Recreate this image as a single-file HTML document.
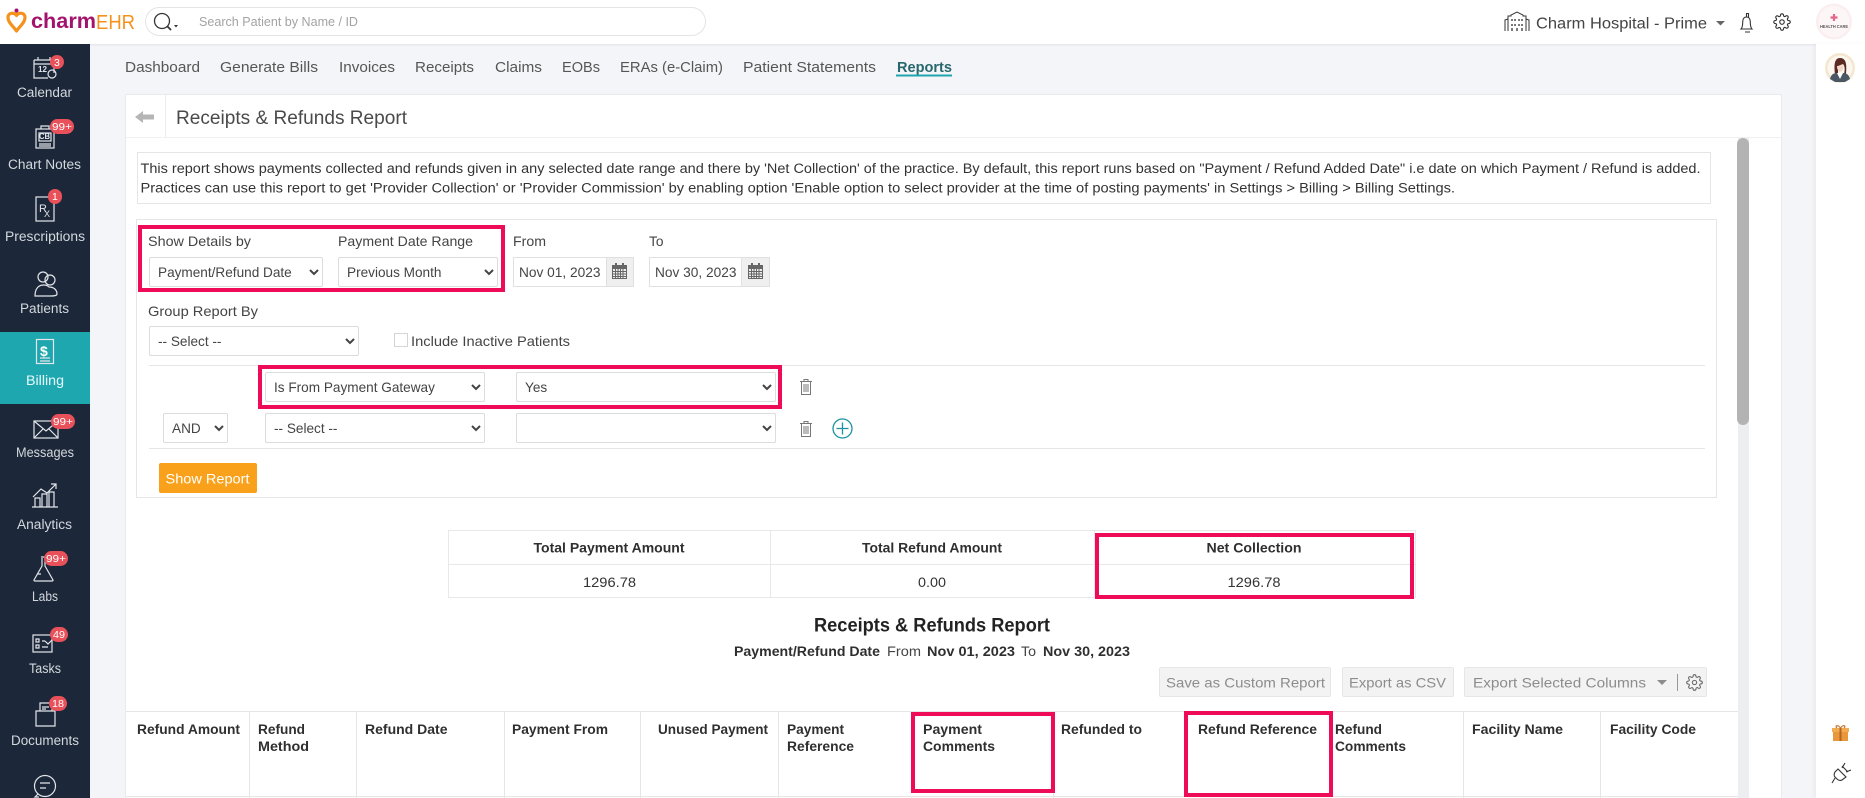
<!DOCTYPE html>
<html lang="en">
<head>
<meta charset="utf-8">
<title>Receipts &amp; Refunds Report</title>
<style>
html,body{margin:0;padding:0;width:1865px;height:798px;overflow:hidden;background:#f4f5f8;font-family:"Liberation Sans",sans-serif}
#w{position:absolute;left:0;top:0;width:1865px;height:798px;overflow:hidden;filter:blur(.35px)}
.a{position:absolute;box-sizing:border-box}
select{position:absolute;box-sizing:border-box;background:#fff;border:1px solid #dcdcdc;border-radius:2px;color:#444;font:13.6px "Liberation Sans",sans-serif;padding:0 0 0 4px;margin:0;outline:0}
svg.o{position:absolute;left:0;top:0;pointer-events:none}
svg text{font-family:"Liberation Sans",sans-serif;fill:#444;font-size:14px}
.b{font-weight:700;fill:#2f2f2f}
.s{fill:#d3d8dd;font-size:13.5px}
.t{fill:#fff;font-size:10.5px}
.i{fill:none;stroke:#e3e6ea;stroke-width:1.2}
.n{font-size:15px;fill:#565656}
.g{fill:#8c8c8c;font-size:14px}
.r{position:absolute;box-sizing:border-box;border:4px solid #ee0b58}
</style>
</head>
<body>
<div id="w">
<!-- top bar -->
<div class="a" style="left:0;top:0;width:1865px;height:44px;background:#fff;box-shadow:0 1px 2px rgba(0,0,0,.08)"></div>
<div class="a" style="left:145px;top:7px;width:561px;height:29px;border:1px solid #e4e4e4;border-radius:15px;background:#fff"></div>
<!-- sidebar -->
<div class="a" style="left:0;top:44px;width:90px;height:754px;background:#1c2739"></div>
<div class="a" style="left:0;top:332px;width:90px;height:72px;background:#1fa7af"></div>
<!-- right rail -->
<div class="a" style="left:1816px;top:44px;width:49px;height:754px;background:#fff;box-shadow:-3px 0 4px rgba(0,0,0,.04)"></div>
<!-- panel -->
<div class="a" style="left:125px;top:94px;width:1657px;height:704px;background:#fff;border:1px solid #e9eaec;border-bottom:0;border-radius:2px"></div>
<div class="a" style="left:126px;top:137px;width:1655px;height:1px;background:#f1f1f1"></div>
<div class="a" style="left:165px;top:95px;width:1px;height:42px;background:#ececec"></div>
<!-- scrollbar -->
<div class="a" style="left:1738px;top:138px;width:11px;height:660px;background:#eceef1"></div>
<div class="a" style="left:1737px;top:138px;width:12px;height:287px;background:#b3b3b3;border-radius:6px"></div>
<!-- description -->
<div class="a" style="left:137px;top:152px;width:1574px;height:52px;border:1px solid #e6e6e6"></div>
<!-- form -->
<div class="a" style="left:136px;top:219px;width:1581px;height:279px;border:1px solid #e6e6e6"></div>
<select style="left:149px;top:257px;width:174px;height:30px"><option>Payment/Refund Date</option></select>
<select style="left:338px;top:257px;width:160px;height:30px"><option>Previous Month</option></select>
<div class="a" style="left:513px;top:257px;width:121px;height:30px;border:1px solid #e0e0e0;background:#fff"></div>
<div class="a" style="left:606px;top:257px;width:28px;height:30px;border:1px solid #e0e0e0;background:#efefef"></div>
<div class="a" style="left:649px;top:257px;width:121px;height:30px;border:1px solid #e0e0e0;background:#fff"></div>
<div class="a" style="left:741px;top:257px;width:29px;height:30px;border:1px solid #e0e0e0;background:#efefef"></div>
<select style="left:149px;top:326px;width:210px;height:30px"><option>-- Select --</option></select>
<div class="a" style="left:394px;top:333px;width:14px;height:14px;border:1px solid #d5d5d5;background:#fff"></div>
<div class="a" style="left:149px;top:365px;width:1556px;height:1px;background:#e6e6e6"></div>
<select style="left:265px;top:372px;width:220px;height:30px"><option>Is From Payment Gateway</option></select>
<select style="left:516px;top:372px;width:260px;height:30px"><option>Yes</option></select>
<select style="left:163px;top:413px;width:65px;height:30px"><option>AND</option></select>
<select style="left:265px;top:413px;width:220px;height:30px"><option>-- Select --</option></select>
<select style="left:516px;top:413px;width:260px;height:30px"><option></option></select>
<div class="a" style="left:149px;top:448px;width:1556px;height:1px;background:#e6e6e6"></div>
<div class="a" style="left:159px;top:463px;width:98px;height:30px;background:#f9a11b;border-radius:2px"></div>
<!-- summary table -->
<div class="a" style="left:448px;top:530px;width:968px;height:68px;border:1px solid #e8e8e8"></div>
<div class="a" style="left:449px;top:564px;width:966px;height:1px;background:#e8e8e8"></div>
<div class="a" style="left:770px;top:531px;width:1px;height:66px;background:#e8e8e8"></div>
<div class="a" style="left:1094px;top:531px;width:1px;height:66px;background:#e8e8e8"></div>
<!-- buttons -->
<div class="a" style="left:1159px;top:667px;width:172px;height:30px;background:#f3f3f3;border:1px solid #e6e6e6;border-radius:2px"></div>
<div class="a" style="left:1342px;top:667px;width:112px;height:30px;background:#f3f3f3;border:1px solid #e6e6e6;border-radius:2px"></div>
<div class="a" style="left:1464px;top:667px;width:243px;height:30px;background:#f3f3f3;border:1px solid #e6e6e6;border-radius:2px"></div>
<div class="a" style="left:1677px;top:674px;width:1px;height:17px;background:#999"></div>
<!-- report table -->
<div class="a" style="left:126px;top:711px;width:1612px;height:1px;background:#e6e6e6"></div>
<div class="a" style="left:126px;top:796px;width:1612px;height:1px;background:#e6e6e6"></div>
<div class="a" style="left:249px;top:711px;width:1px;height:87px;background:#e6e6e6"></div>
<div class="a" style="left:356px;top:711px;width:1px;height:87px;background:#e6e6e6"></div>
<div class="a" style="left:504px;top:711px;width:1px;height:87px;background:#e6e6e6"></div>
<div class="a" style="left:640px;top:711px;width:1px;height:87px;background:#e6e6e6"></div>
<div class="a" style="left:778px;top:711px;width:1px;height:87px;background:#e6e6e6"></div>
<div class="a" style="left:1053px;top:711px;width:1px;height:87px;background:#e6e6e6"></div>
<div class="a" style="left:1463px;top:711px;width:1px;height:87px;background:#e6e6e6"></div>
<div class="a" style="left:1600px;top:711px;width:1px;height:87px;background:#e6e6e6"></div>
<!-- highlight boxes -->
<div class="r" style="left:138px;top:225px;width:367px;height:67px"></div>
<div class="r" style="left:258px;top:365px;width:524px;height:44px"></div>
<div class="r" style="left:1095px;top:533px;width:319px;height:66px"></div>
<div class="r" style="left:911px;top:712px;width:144px;height:81px"></div>
<div class="r" style="left:1184px;top:711px;width:149px;height:86px"></div>

<svg class="o" width="1865" height="798" viewBox="0 0 1865 798" xmlns="http://www.w3.org/2000/svg">
<defs>
<symbol id="gear" viewBox="0 0 24 24"><g fill="none" stroke-width="1.5"><circle cx="12" cy="12" r="3"/><path d="M19.4 15a1.65 1.65 0 0 0 .33 1.82l.06.06a2 2 0 0 1 0 2.83 2 2 0 0 1-2.83 0l-.06-.06a1.65 1.65 0 0 0-1.82-.33 1.65 1.65 0 0 0-1 1.51V21a2 2 0 0 1-2 2 2 2 0 0 1-2-2v-.09A1.65 1.65 0 0 0 9 19.4a1.65 1.65 0 0 0-1.82.33l-.06.06a2 2 0 0 1-2.83 0 2 2 0 0 1 0-2.83l.06-.06a1.65 1.65 0 0 0 .33-1.82 1.65 1.65 0 0 0-1.51-1H3a2 2 0 0 1-2-2 2 2 0 0 1 2-2h.09A1.65 1.65 0 0 0 4.6 9a1.65 1.65 0 0 0-.33-1.82l-.06-.06a2 2 0 0 1 0-2.83 2 2 0 0 1 2.83 0l.06.06a1.65 1.65 0 0 0 1.82.33H9a1.65 1.65 0 0 0 1-1.51V3a2 2 0 0 1 2-2 2 2 0 0 1 2 2v.09a1.65 1.65 0 0 0 1 1.51 1.65 1.65 0 0 0 1.82-.33l.06-.06a2 2 0 0 1 2.83 0 2 2 0 0 1 0 2.83l-.06.06a1.65 1.65 0 0 0-.33 1.82V9a1.65 1.65 0 0 0 1.51 1H21a2 2 0 0 1 2 2 2 2 0 0 1-2 2h-.09a1.65 1.65 0 0 0-1.51 1z"/></g></symbol>
<symbol id="trash" viewBox="0 0 14 18"><g fill="none" stroke="#777" stroke-width="1"><path d="M1 3.5h12M5 3.5V1.5h4v2M2.5 3.5v13h9v-13M5 6v8M7 6v8M9 6v8"/></g></symbol>
<symbol id="cal" viewBox="0 0 15 16"><path fill="#666" d="M0 2h3V0h2v2h5V0h2v2h3v14H0zM1 6v9h13V6z"/><path stroke="#666" stroke-width="1" d="M1 8.5h13M1 11h13M1 13.5h13M3.5 6v9M6 6v9M8.5 6v9M11 6v9"/></symbol>
</defs>

<!-- logo -->
<path d="M16.500 15.500c-2.500-3.500-8.500-3-8.500 2 0 5 5 8.500 8.500 13.500 3.500-5 8.500-8.500 8.500-13.500 0-5-6-5.500-8.500-2z" fill="none" stroke="#f5921e" stroke-width="3.200" stroke-linejoin="round"/>
<path d="M16.500 14V10" stroke="#f5921e" stroke-width="2"/>
<circle cx="16.500" cy="10.500" r="2" fill="#a3136c"/>
<text x="31" y="28" textLength="65" lengthAdjust="spacingAndGlyphs" style="font-size:21px;font-weight:700;fill:#a3136c">charm</text>
<text x="96" y="29" textLength="39" lengthAdjust="spacingAndGlyphs" style="font-size:20px;fill:#f5921e">EHR</text>

<!-- search -->
<circle cx="162" cy="21" r="7.500" fill="none" stroke="#333" stroke-width="1.300"/>
<path d="M167.500 26.500l3.500 3.500" stroke="#333" stroke-width="1.800"/>
<path d="M174 25h4l-2 2.500z" fill="#333"/>
<text x="199" y="26" textLength="159" lengthAdjust="spacingAndGlyphs" style="font-size:12.500px;fill:#a3a3a3">Search Patient by Name / ID</text>

<!-- top right -->
<g fill="none" stroke="#333" stroke-width="1">
<path d="M1505 31V20l3-1M1529 31V20l-3-1M1508 31V16h3v-1l6-3 6 3v1h3v15"/>
<path d="M1512 19v2M1515 19v2M1519 19v2M1522 19v2M1512 24v2M1515 24v2M1519 24v2M1522 24v2M1512 28v3M1517 28v3M1522 28v3" stroke-width="1.300"/>
</g>
<text x="1536" y="28.500" textLength="171" lengthAdjust="spacingAndGlyphs" style="font-size:15.500px;fill:#444">Charm Hospital - Prime</text>
<path d="M1716 21h9l-4.500 4.500z" fill="#666"/>
<path d="M1741 29c2-2 1.500-5 1.800-8 .3-3 2-4 3.700-4 1.700 0 3.400 1 3.700 4 .3 3-.2 6 1.800 8zM1745 32h5M1746.500 17v-3.500h2V17" fill="none" stroke="#333" stroke-width="1.100"/>
<use href="#gear" x="1773" y="13" width="18" height="18" stroke="#333"/>
<circle cx="1834" cy="21.500" r="18" fill="#fbeef1"/>
<circle cx="1834" cy="21.500" r="15.500" fill="#fff" opacity=".45"/>
<path d="M1834 14v7M1830.500 17.500h7" stroke="#e5688a" stroke-width="2.200"/>
<text x="1820" y="28" textLength="28" lengthAdjust="spacingAndGlyphs" style="font-size:4.500px;font-weight:700;fill:#555">HEALTH CARE</text>
<!-- user avatar -->
<circle cx="1840" cy="68" r="15" fill="#f4e6cf"/>
<circle cx="1840" cy="68" r="12.500" fill="#fbf7ef"/>
<path d="M1835 74c-1-8-1-16 5-16 6 0 7 6 6 16l-2 0c1-4 1-8-1-10-2 1-4 1-5 3 0 3 0 5 0 7z" fill="#5b2a22"/>
<path d="M1837 66c2 0 4-1 6-2 1 3 1 6-3 8-2-1-3-3-3-6z" fill="#f3d7c8"/>
<path d="M1830 79c1-4 3-6 7-6l3 4 3-4c4 0 6 2 7 6l-5 3h-10z" fill="#4a5866"/>
<path d="M1837 73h6l-3 6z" fill="#fff"/>
<!-- gift, plug -->
<rect x="1833" y="731" width="15" height="10" fill="#e9973d"/>
<rect x="1832" y="728" width="17" height="4" fill="#f3ab52"/>
<path d="M1840.500 728v13" stroke="#b5651d" stroke-width="2"/>
<path d="M1840.500 728c-3-4-6-2-3.500 0M1840.500 728c3-4 6-2 3.500 0" fill="none" stroke="#c9742a" stroke-width="1.200"/>
<path d="M1842 766l6 6M1838 769l8 8-4 3c-2 1-4 0-5-1l-2-2c-1-1-1-3 0-5zM1845 763l-3 5M1851 770l-5 2M1835 778l-3 5" fill="none" stroke="#333" stroke-width="1.100"/>

<!-- nav -->
<text class="n" x="125" y="72" textLength="75" lengthAdjust="spacingAndGlyphs">Dashboard</text>
<text class="n" x="220" y="72" textLength="98" lengthAdjust="spacingAndGlyphs">Generate Bills</text>
<text class="n" x="339" y="72" textLength="56" lengthAdjust="spacingAndGlyphs">Invoices</text>
<text class="n" x="415" y="72" textLength="59" lengthAdjust="spacingAndGlyphs">Receipts</text>
<text class="n" x="495" y="72" textLength="47" lengthAdjust="spacingAndGlyphs">Claims</text>
<text class="n" x="562" y="72" textLength="38" lengthAdjust="spacingAndGlyphs">EOBs</text>
<text class="n" x="620" y="72" textLength="103" lengthAdjust="spacingAndGlyphs">ERAs (e-Claim)</text>
<text class="n" x="743" y="72" textLength="133" lengthAdjust="spacingAndGlyphs">Patient Statements</text>
<text class="n" x="897" y="72" textLength="55" lengthAdjust="spacingAndGlyphs" style="font-weight:700;fill:#27686e">Reports</text>
<rect x="896" y="74.500" width="56" height="2" fill="#1fa7af"/>

<!-- sidebar labels -->
<text class="s" x="17" y="97" textLength="55" lengthAdjust="spacingAndGlyphs">Calendar</text>
<text class="s" x="8" y="169" textLength="73" lengthAdjust="spacingAndGlyphs">Chart Notes</text>
<text class="s" x="5" y="241" textLength="80" lengthAdjust="spacingAndGlyphs">Prescriptions</text>
<text class="s" x="20" y="313" textLength="49" lengthAdjust="spacingAndGlyphs">Patients</text>
<text class="s" x="26" y="385" textLength="38" lengthAdjust="spacingAndGlyphs" style="fill:#e6fbfc">Billing</text>
<text class="s" x="16" y="457" textLength="58" lengthAdjust="spacingAndGlyphs">Messages</text>
<text class="s" x="17" y="529" textLength="55" lengthAdjust="spacingAndGlyphs">Analytics</text>
<text class="s" x="32" y="601" textLength="26" lengthAdjust="spacingAndGlyphs">Labs</text>
<text class="s" x="29" y="673" textLength="32" lengthAdjust="spacingAndGlyphs">Tasks</text>
<text class="s" x="11" y="745" textLength="68" lengthAdjust="spacingAndGlyphs">Documents</text>

<!-- sidebar icons -->
<g class="i">
<path d="M34 60h20v13M34 60v18h14M34 64h20M38 57v3M50 57v3"/><circle cx="52" cy="74" r="4"/>
<rect x="36" y="129" width="18" height="19"/><path d="M41 129v-3h8v3M39 144h12M39 146h12"/><rect x="39" y="133" width="12" height="8"/>
<rect x="36" y="197" width="18" height="24"/>
<circle cx="43" cy="277" r="5"/><circle cx="50" cy="280" r="5"/><path d="M35 296c0-8 4-11 9-11 3 0 4 1 5 2 5 0 8 3 8 7 0 2-4 2-7 2z"/>
<rect x="36.500" y="339.500" width="17" height="24"/><path d="M40 358h10M40 361h10" />
<rect x="34" y="421" width="24" height="17"/><path d="M34 421l12 10 12-10M34 438l9-9M58 438l-9-9"/>
<path d="M32 507h26M35 507v-9h5v9M42 507v-13h5v13M49 507v-15h5v15M33 497l8-8 6 4 9-9M51 484h5v5"/>
<path d="M41 557h6M42 558v8l-8 14c0 1 1 1 1 1h17s1 0 1-1l-8-14v-8M37 574h4"/>
<rect x="33" y="635" width="19" height="17"/><path d="M36 639h3v3h-3zM36 645h3v3h-3zM42 641h3M42 647h6M45 641l3 3 6-6"/>
<path d="M36 711h19v15H36zM40 711v-8h9l3 3v5M42 707h7M42 709h4"/>
<circle cx="45" cy="786" r="10.500"/><path d="M40 783h10M40 788h6M38 794l-3 3h4"/>
</g>
<text x="38" y="72" textLength="9" lengthAdjust="spacingAndGlyphs" style="font-size:8px;font-weight:700;fill:#e3e6ea">12</text>
<text x="39" y="139" textLength="11" lengthAdjust="spacingAndGlyphs" style="font-size:8px;font-weight:700;fill:#e3e6ea">CB</text>
<text x="39" y="212" style="font-size:11px;fill:#e3e6ea">R</text>
<text x="44" y="217" style="font-size:9px;fill:#e3e6ea">X</text>
<text x="40" y="356" style="font-size:14px;font-weight:700;fill:#fff">$</text>

<!-- badges -->
<g fill="#e8515a">
<rect x="50" y="55" width="14" height="14" rx="7"/>
<rect x="50" y="119" width="24" height="15" rx="7.500"/>
<rect x="48" y="189" width="14" height="15" rx="7"/>
<rect x="51" y="414" width="24" height="15" rx="7.500"/>
<rect x="44" y="551" width="24" height="15" rx="7.500"/>
<rect x="50" y="627" width="18" height="15" rx="7.500"/>
<rect x="49" y="696" width="18" height="15" rx="7.500"/>
</g>
<text class="t" x="54" y="66">3</text>
<text class="t" x="52" y="130" textLength="20" lengthAdjust="spacingAndGlyphs">99+</text>
<text class="t" x="52" y="200">1</text>
<text class="t" x="53" y="425" textLength="20" lengthAdjust="spacingAndGlyphs">99+</text>
<text class="t" x="46" y="562" textLength="20" lengthAdjust="spacingAndGlyphs">99+</text>
<text class="t" x="53" y="638" textLength="12" lengthAdjust="spacingAndGlyphs">49</text>
<text class="t" x="52" y="707" textLength="12" lengthAdjust="spacingAndGlyphs">18</text>

<!-- title -->
<path d="M135 117l8-6v3.500h11v5h-11v3.500z" fill="#b5b5b5"/>
<text x="176" y="124" textLength="231" lengthAdjust="spacingAndGlyphs" style="font-size:19px;fill:#4a4a4a">Receipts &amp; Refunds Report</text>

<!-- description -->
<text x="140.500" y="173" textLength="1560" lengthAdjust="spacingAndGlyphs" style="font-size:13.500px;fill:#333">This report shows payments collected and refunds given in any selected date range and there by 'Net Collection' of the practice. By default, this report runs based on "Payment / Refund Added Date" i.e date on which Payment / Refund is added.</text>
<text x="140.500" y="192.500" textLength="1314.500" lengthAdjust="spacingAndGlyphs" style="font-size:13.500px;fill:#333">Practices can use this report to get 'Provider Collection' or 'Provider Commission' by enabling option 'Enable option to select provider at the time of posting payments' in Settings &gt; Billing &gt; Billing Settings.</text>

<!-- form labels -->
<text x="148" y="246" textLength="103" lengthAdjust="spacingAndGlyphs">Show Details by</text>
<text x="338" y="246" textLength="135" lengthAdjust="spacingAndGlyphs">Payment Date Range</text>
<text x="513" y="246" textLength="33" lengthAdjust="spacingAndGlyphs">From</text>
<text x="649" y="246" textLength="14.500" lengthAdjust="spacingAndGlyphs">To</text>
<text x="519" y="277" textLength="81.500" lengthAdjust="spacingAndGlyphs">Nov 01, 2023</text>
<text x="655" y="277" textLength="81.500" lengthAdjust="spacingAndGlyphs">Nov 30, 2023</text>
<use href="#cal" x="612" y="263" width="15" height="16"/>
<use href="#cal" x="748" y="263" width="15" height="16"/>
<text x="148" y="316" textLength="110" lengthAdjust="spacingAndGlyphs">Group Report By</text>
<text x="411" y="346" textLength="159" lengthAdjust="spacingAndGlyphs">Include Inactive Patients</text>
<use href="#trash" x="799" y="378" width="14" height="18"/>
<use href="#trash" x="799" y="420" width="14" height="18"/>
<circle cx="842.500" cy="428.500" r="9.500" fill="none" stroke="#1c93a0" stroke-width="1.300"/>
<path d="M842.500 422.500v12M836.500 428.500h12" stroke="#1c93a0" stroke-width="1.300"/>
<text x="165.500" y="483.500" textLength="84" lengthAdjust="spacingAndGlyphs" style="fill:#fff;font-size:14px">Show Report</text>

<!-- summary -->
<text class="b" x="533.500" y="552.500" textLength="151" lengthAdjust="spacingAndGlyphs" style="font-size:13.500px">Total Payment Amount</text>
<text class="b" x="862" y="552.500" textLength="140" lengthAdjust="spacingAndGlyphs" style="font-size:13.500px">Total Refund Amount</text>
<text class="b" x="1206.500" y="552.500" textLength="95" lengthAdjust="spacingAndGlyphs" style="font-size:13.500px">Net Collection</text>
<text x="583" y="587" textLength="53" lengthAdjust="spacingAndGlyphs" style="fill:#333">1296.78</text>
<text x="918" y="587" textLength="28" lengthAdjust="spacingAndGlyphs" style="fill:#333">0.00</text>
<text x="1227.500" y="587" textLength="53" lengthAdjust="spacingAndGlyphs" style="fill:#333">1296.78</text>

<text class="b" x="814" y="631.500" textLength="236" lengthAdjust="spacingAndGlyphs" style="font-size:19px;fill:#222">Receipts &amp; Refunds Report</text>
<text class="b" x="734" y="656" textLength="146" lengthAdjust="spacingAndGlyphs" style="font-size:13.500px">Payment/Refund Date</text>
<text x="887" y="656" textLength="34" lengthAdjust="spacingAndGlyphs" style="font-size:13.500px">From</text>
<text class="b" x="927" y="656" textLength="88" lengthAdjust="spacingAndGlyphs" style="font-size:13.500px">Nov 01, 2023</text>
<text x="1021" y="656" textLength="15" lengthAdjust="spacingAndGlyphs" style="font-size:13.500px">To</text>
<text class="b" x="1043" y="656" textLength="87" lengthAdjust="spacingAndGlyphs" style="font-size:13.500px">Nov 30, 2023</text>

<!-- buttons -->
<text class="g" x="1166" y="687.500" textLength="159" lengthAdjust="spacingAndGlyphs">Save as Custom Report</text>
<text class="g" x="1349" y="687.500" textLength="97" lengthAdjust="spacingAndGlyphs">Export as CSV</text>
<text class="g" x="1473" y="687.500" textLength="173" lengthAdjust="spacingAndGlyphs">Export Selected Columns</text>
<path d="M1657 680h10l-5 5z" fill="#8c8c8c"/>
<use href="#gear" x="1686" y="674" width="17" height="17" stroke="#666"/>

<!-- table headers -->
<text class="b" x="137" y="734" textLength="103" lengthAdjust="spacingAndGlyphs" style="font-size:13.500px">Refund Amount</text>
<text class="b" x="258" y="734" textLength="47" lengthAdjust="spacingAndGlyphs" style="font-size:13.500px">Refund</text>
<text class="b" x="258" y="751" textLength="51" lengthAdjust="spacingAndGlyphs" style="font-size:13.500px">Method</text>
<text class="b" x="365" y="734" textLength="82.500" lengthAdjust="spacingAndGlyphs" style="font-size:13.500px">Refund Date</text>
<text class="b" x="512" y="734" textLength="96" lengthAdjust="spacingAndGlyphs" style="font-size:13.500px">Payment From</text>
<text class="b" x="658" y="734" textLength="110" lengthAdjust="spacingAndGlyphs" style="font-size:13.500px">Unused Payment</text>
<text class="b" x="787" y="734" textLength="57" lengthAdjust="spacingAndGlyphs" style="font-size:13.500px">Payment</text>
<text class="b" x="787" y="751" textLength="67" lengthAdjust="spacingAndGlyphs" style="font-size:13.500px">Reference</text>
<text class="b" x="923" y="734" textLength="59" lengthAdjust="spacingAndGlyphs" style="font-size:13.500px">Payment</text>
<text class="b" x="923" y="751" textLength="72" lengthAdjust="spacingAndGlyphs" style="font-size:13.500px">Comments</text>
<text class="b" x="1061" y="734" textLength="81" lengthAdjust="spacingAndGlyphs" style="font-size:13.500px">Refunded to</text>
<text class="b" x="1198" y="734" textLength="119" lengthAdjust="spacingAndGlyphs" style="font-size:13.500px">Refund Reference</text>
<text class="b" x="1335" y="734" textLength="47" lengthAdjust="spacingAndGlyphs" style="font-size:13.500px">Refund</text>
<text class="b" x="1335" y="751" textLength="71" lengthAdjust="spacingAndGlyphs" style="font-size:13.500px">Comments</text>
<text class="b" x="1472" y="734" textLength="91" lengthAdjust="spacingAndGlyphs" style="font-size:13.500px">Facility Name</text>
<text class="b" x="1610" y="734" textLength="86" lengthAdjust="spacingAndGlyphs" style="font-size:13.500px">Facility Code</text>
</svg>
</div>
</body>
</html>
